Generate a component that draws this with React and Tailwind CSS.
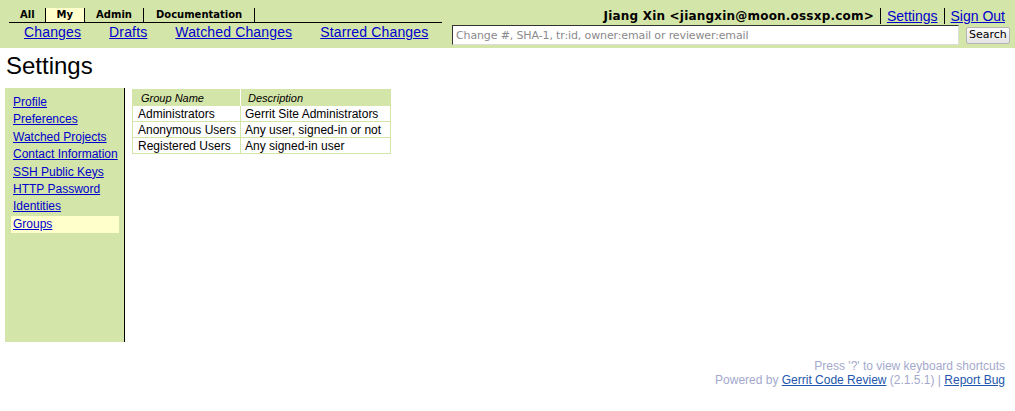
import React from 'react'

const tabs = ['All', 'My', 'Admin', 'Documentation']
const menu = ['Changes', 'Drafts', 'Watched Changes', 'Starred Changes']
const sideItems = [
    'Profile',
    'Preferences',
    'Watched Projects',
    'Contact Information',
    'SSH Public Keys',
    'HTTP Password',
    'Identities',
    'Groups',
]
const groups = [
    ['Administrators', 'Gerrit Site Administrators'],
    ['Anonymous Users', 'Any user, signed-in or not'],
    ['Registered Users', 'Any signed-in user'],
]

const sans = "font-['Liberation_Sans',Arial,sans-serif]"
const deja = "font-['DejaVu_Sans',Verdana,sans-serif]"

const App = () => {
    return (
        <div className={`min-h-[411px] bg-white text-black ${sans}`}>
            {/* Top bar */}
            <header className="h-[48px] bg-[#d4e5a9] flex justify-between">
                <div className="pl-[9px] pt-[8px]">
                    <div className="flex w-[433px] border-b border-black">
                        {tabs.map((t) => (
                            <div
                                key={t}
                                className={`h-[14px] border-r border-black text-[10px] leading-[14px] font-bold ${deja} ${t === 'My' ? 'bg-[#ffffcc]' : ''} ${t === 'All' ? 'pl-[11px] pr-[10px]' : 'px-[11px]'} ${t === 'Documentation' ? 'pl-[12px] pr-[12px]' : ''}`}
                            >
                                {t}
                            </div>
                        ))}
                    </div>
                    <div className="flex pl-[1px]">
                        {menu.map((m) => (
                            <a key={m} href="#" className="px-[14px] text-[14px] leading-[18px] tracking-[0.15px] text-[#0000cc] underline">
                                {m}
                            </a>
                        ))}
                    </div>
                </div>

                <div className="w-[563px] pt-[7px] pr-[5px]">
                    <div className="flex justify-end items-center pr-[5px] h-[18px] text-[14px] leading-[16px]">
                        <span className={`font-bold text-[12px] tracking-[0.2px] ${deja}`}>Jiang Xin &lt;jiangxin@moon.ossxp.com&gt;</span>
                        <span className="mx-[6px] h-[16px] border-l border-black"></span>
                        <a href="#" className="text-[#0000cc] underline">Settings</a>
                        <span className="mx-[6px] h-[16px] border-l border-black"></span>
                        <a href="#" className="text-[#0000cc] underline">Sign Out</a>
                    </div>
                    <div className="flex items-center">
                        <input
                            placeholder="Change #, SHA-1, tr:id, owner:email or reviewer:email"
                            className={`w-[507px] h-[20px] bg-white border border-t-[#333] border-l-[#333] border-r-[#ddd] border-b-[#ddd] px-[3px] text-[11px] tracking-[-0.13px] ${deja} placeholder:text-[#8a8a8a] outline-none`}
                        />
                        <button className={`ml-[7px] h-[17px] px-[2px] border border-[#b5b5b5] rounded-[2px] bg-gradient-to-b from-[#fbfbfb] to-[#e3e3e3] text-[11px] leading-[14px] ${deja}`}>
                            Search
                        </button>
                    </div>
                </div>
            </header>

            {/* Page title */}
            <h1 className="mt-[4px] ml-[6px] text-[24px] leading-[28px]">Settings</h1>

            {/* Content */}
            <div className="mt-[8px] flex items-start">
                <div className="ml-[5px] w-[120px] h-[254px] bg-[#d4e5a9] border-r border-black pt-[6px] pl-[6px] pr-[5px]">
                    {sideItems.map((s) => (
                        <div
                            key={s}
                            className={`h-[17.4px] pl-[2px] text-[12px] leading-[17px] ${s === 'Groups' ? 'bg-[#ffffcc]' : ''}`}
                        >
                            <a href="#" className="text-[#0000cc] underline">{s}</a>
                        </div>
                    ))}
                </div>

                <table className="ml-[7px] mt-[1px] border-collapse border border-[#d4e5a9] text-[12px]">
                    <thead>
                        <tr>
                            <th className="w-[108px] h-[16px] bg-[#d4e5a9] border-r border-white pl-[8px] text-left font-normal italic text-[11px] leading-[14px]">
                                Group Name
                            </th>
                            <th className="w-[150px] h-[16px] bg-[#d4e5a9] pl-[7px] text-left font-normal italic text-[11px] leading-[14px]">
                                Description
                            </th>
                        </tr>
                    </thead>
                    <tbody>
                        {groups.map(([name, desc]) => (
                            <tr key={name}>
                                <td className="h-[16px] border border-[#d4e5a9] pl-[5px] pr-[3px] leading-[14px] whitespace-nowrap">{name}</td>
                                <td className="h-[16px] border border-[#d4e5a9] pl-[4px] pr-[3px] leading-[14px] whitespace-nowrap">{desc}</td>
                            </tr>
                        ))}
                    </tbody>
                </table>
            </div>

            {/* Footer */}
            <footer className="mt-[17px] pr-[10px] text-right text-[12px] leading-[14px] text-[#a3a9cc]">
                <div>Press '?' to view keyboard shortcuts</div>
                <div>
                    Powered by <a href="#" className="text-[#2356ac] underline">Gerrit Code Review</a> (2.1.5.1) |{' '}
                    <a href="#" className="text-[#2356ac] underline">Report Bug</a>
                </div>
            </footer>
        </div>
    )
}

export default App
